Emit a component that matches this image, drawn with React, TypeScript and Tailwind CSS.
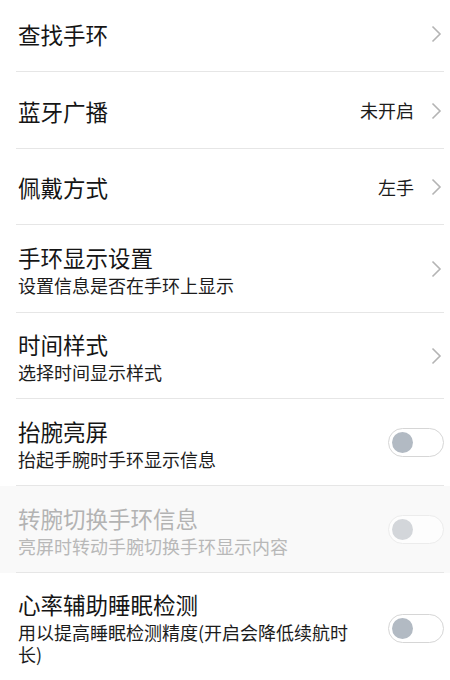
import React from 'react';

type Row = {
  title: string;
  desc?: string;
  value?: string;
  kind: 'link' | 'toggle';
  disabled?: boolean;
  height: string;
};

const rows: Row[] = [
  { title: '查找手环', kind: 'link', height: 'h-[72px]' },
  { title: '蓝牙广播', value: '未开启', kind: 'link', height: 'h-[77px]' },
  { title: '佩戴方式', value: '左手', kind: 'link', height: 'h-[76px]' },
  { title: '手环显示设置', desc: '设置信息是否在手环上显示', kind: 'link', height: 'h-[88px]' },
  { title: '时间样式', desc: '选择时间显示样式', kind: 'link', height: 'h-[86px]' },
  { title: '抬腕亮屏', desc: '抬起手腕时手环显示信息', kind: 'toggle', height: 'h-[87px]' },
  { title: '转腕切换手环信息', desc: '亮屏时转动手腕切换手环显示内容', kind: 'toggle', disabled: true, height: 'h-[87px]' },
  { title: '心率辅助睡眠检测', desc: '用以提高睡眠检测精度(开启会降低续航时长)', kind: 'toggle', height: 'h-[110px]' },
];

function Chevron() {
  return (
    <svg width="11" height="18" viewBox="0 0 11 18" fill="none" className="shrink-0">
      <path d="M1.5 1.5 L9 9 L1.5 16.5" stroke="#b4b4b4" strokeWidth="1.6" />
    </svg>
  );
}

function Toggle({ disabled }: { disabled?: boolean }) {
  return (
    <div
      className={`relative w-[56px] h-[29px] rounded-full border shrink-0 ${
        disabled ? 'border-[#ececec] bg-[#fdfdfd]' : 'border-[#d6d6d6] bg-white'
      }`}
    >
      <span
        className={`absolute left-[3px] top-[3px] size-[21px] rounded-full ${
          disabled ? 'bg-[#d3d6da]' : 'bg-[#b2bac3]'
        }`}
      />
    </div>
  );
}

export default function App() {
  return (
    <div
      className="w-[450px] h-[680px] overflow-hidden bg-white"
      style={{ fontFamily: '"Noto Sans CJK SC", "Noto Sans", sans-serif' }}
    >
      {rows.map((r, i) => (
        <div key={i} className={`${r.height} relative ${r.disabled ? 'bg-[#f9f9f9]' : 'bg-white'}`}>
          <div
            className={`h-full flex items-center ${r.kind === 'toggle' ? 'pr-[6px]' : 'pr-[8px]'} pl-[18px] ${
              i === rows.length - 1 ? 'items-start pt-[16px]' : ''
            } ${i === 0 ? 'pb-[5px]' : ''}`}
          >
            <div className={`flex flex-col ${r.desc && r.desc.length > 16 ? 'w-[335px]' : 'flex-1'}`}>
              <span
                className={`text-[22.5px] leading-[30px] ${r.disabled ? 'text-[#b3b3b3]' : 'text-[#151515]'}`}
              >
                {r.title}
              </span>
              {r.desc && (
                <span
                  className={`text-[18px] leading-[22px] mt-[2px] ${r.disabled ? 'text-[#b8b8b8]' : 'text-[#1c1c1c]'}`}
                >
                  {r.desc}
                </span>
              )}
            </div>
            <div className={`ml-auto flex items-center gap-[17px] ${i === rows.length - 1 ? 'mt-[25px]' : ''}`}>
              {r.value && <span className="text-[18px] text-[#1c1c1c]">{r.value}</span>}
              {r.kind === 'link' ? <Chevron /> : <Toggle disabled={r.disabled} />}
            </div>
          </div>
          {i < rows.length - 1 && (
            <div className="absolute bottom-0 left-[16px] right-[6px] border-b border-[#e6e6e6]" />
          )}
        </div>
      ))}
    </div>
  );
}
